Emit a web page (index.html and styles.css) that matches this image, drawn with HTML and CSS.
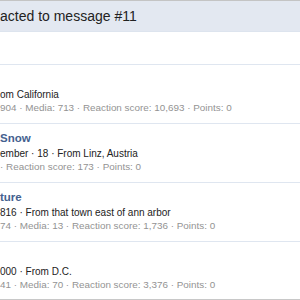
FILE: index.html
```html
<!DOCTYPE html>
<html>
<head>
<meta charset="utf-8">
<link rel="stylesheet" href="styles.css">
</head>
<body>
<div class="overlay">
  <div class="head">acted to message #11</div>
  <div class="tabs"></div>
  <ul class="list">
    <li class="row">
      <div class="name"></div>
      <div class="info">om California</div>
      <div class="stats">904 · Media: 713 · Reaction score: 10,693 · Points: 0</div>
    </li>
    <li class="row">
      <div class="name">Snow</div>
      <div class="info">ember · 18 · From Linz, Austria</div>
      <div class="stats">· Reaction score: 173 · Points: 0</div>
    </li>
    <li class="row">
      <div class="name">ture</div>
      <div class="info">816 · From that town east of ann arbor</div>
      <div class="stats">74 · Media: 13 · Reaction score: 1,736 · Points: 0</div>
    </li>
    <li class="row">
      <div class="name"></div>
      <div class="info">000 · From D.C.</div>
      <div class="stats">41 · Media: 70 · Reaction score: 3,376 · Points: 0</div>
    </li>
  </ul>
</div>
</body>
</html>
```
FILE: styles.css
```css
html, body { margin: 0; padding: 0; background: #fff; }
body { font-family: "Liberation Sans", Arial, sans-serif; }
.overlay { width: 300px; height: 300px; overflow: hidden; border-top: 1px solid #c4c4c4; box-sizing: border-box; }
.head { height: 31px; background: #e3e8f1; color: #222; font-size: 14px; line-height: 30px; white-space: nowrap; border-bottom: 1px solid #dde4ee; box-sizing: border-box; }
.tabs { height: 32px; }
.list { list-style: none; margin: 0; padding: 0; }
.row { height: 59px; box-sizing: border-box; border-top: 1px solid #dfe6f0; padding-top: 7px; white-space: nowrap; overflow: hidden; }
.row:last-child { border-bottom: 1px solid #c8c8c8; }
.name { height: 15px; line-height: 15px; font-size: 11.5px; font-weight: bold; color: #44618f; }
.info { height: 15px; line-height: 15px; font-size: 10px; color: #222; }
.stats { height: 12px; line-height: 12px; font-size: 9.9px; color: #939393; }
```
